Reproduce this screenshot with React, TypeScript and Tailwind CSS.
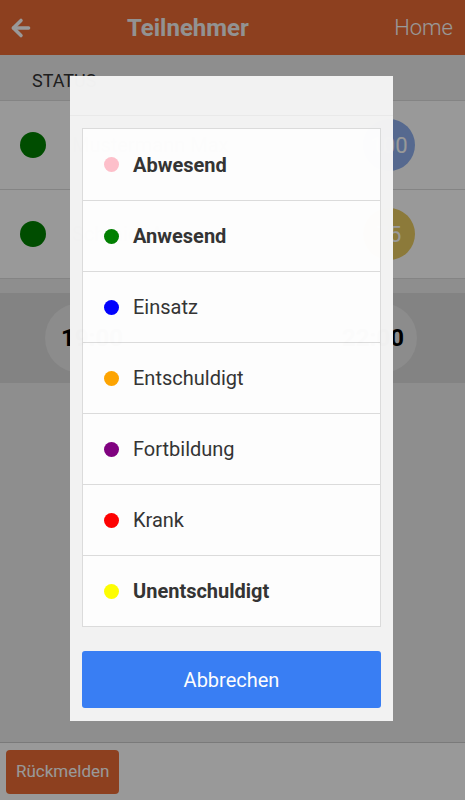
import { ArrowLeft } from 'lucide-react';

interface StatusOption {
  label: string;
  color: string;
  bold?: boolean;
}

const options: StatusOption[] = [
  { label: 'Abwesend', color: 'bg-[#ffc0cb]', bold: true },
  { label: 'Anwesend', color: 'bg-[#008000]', bold: true },
  { label: 'Einsatz', color: 'bg-[#0000ff]' },
  { label: 'Entschuldigt', color: 'bg-[#ffa500]' },
  { label: 'Fortbildung', color: 'bg-[#800080]' },
  { label: 'Krank', color: 'bg-[#ff0000]' },
  { label: 'Unentschuldigt', color: 'bg-[#ffff00]', bold: true },
];

function ParticipantRow({ name, value, circle }: { name: string; value: string; circle: string }) {
  return (
    <div className="flex items-center h-[89px] bg-white border-b border-[#dddddd] pl-5 pr-[50px]">
      <div className="w-[26px] h-[26px] rounded-full bg-[#008000] shrink-0" />
      <span className="ml-[26px] flex-1 text-[20px] text-[#777]">{name}</span>
      <div className={`w-[52px] h-[52px] rounded-full ${circle} flex items-center justify-center text-white text-[22px]`}>
        {value}
      </div>
    </div>
  );
}

export default function App() {
  return (
    <div className="relative h-[800px] w-full overflow-hidden bg-[#ededed] font-['Roboto',sans-serif] flex flex-col">
      {/* Header */}
      <div className="h-[55px] bg-[#eb6c35] flex items-center pl-2 pr-3 shrink-0">
        <ArrowLeft className="w-[26px] h-[26px] text-white" strokeWidth={3.2} />
        <span className="ml-[93px] text-[#f4f4f4] text-[24px] font-bold flex-1">Teilnehmer</span>
        <span className="text-white text-[22px] font-light">Home</span>
      </div>

      {/* Status subheader */}
      <div className="h-[46px] flex items-center pt-[6px] pl-8 border-b border-[#dddddd] text-[18px] text-[#333] shrink-0">
        STATUS
      </div>

      <ParticipantRow name="Mustermann Max" value="100" circle="bg-[#8fb0ee]" />
      <ParticipantRow name="Schmidt Anna" value="75" circle="bg-[#e9cb61]" />

      {/* Time row */}
      <div className="mt-[14px] h-[90px] bg-[#dadada] flex items-center justify-between pl-[45px] pr-[48px] shrink-0">
        <div className="w-[88px] h-[70px] rounded-full bg-white/40 flex items-center justify-center text-[24px] font-bold text-black pl-[6px]">
          19:00
        </div>
        <div className="w-[88px] h-[70px] rounded-full bg-white/40 flex items-center justify-center text-[24px] font-bold text-black">
          22:00
        </div>
      </div>

      <div className="flex-1 flex justify-center pt-[17px]">
        <div className="w-[75px] h-[75px] rounded-full bg-white ml-[-4px]" />
      </div>

      {/* Bottom bar */}
      <div className="h-[58px] bg-white border-t border-[#cccccc] flex items-center px-[6px] shrink-0">
        <button className="h-[44px] px-[10px] rounded bg-[#eb6c35] text-white text-[17px]">Rückmelden</button>
      </div>

      {/* Overlay + popup */}
      <div className="absolute inset-0 bg-black/40 flex items-start pt-[76px] pl-[70px]">
        <div className="w-[323px] bg-[#f4f4f4] opacity-[0.985] pb-[13px]">
          <div className="h-[40px] border-b border-[#ebebeb]" />
          <div className="px-3 pt-3">
            <div className="bg-white border border-[#dddddd]">
              {options.map((o, i) => (
                <div
                  key={o.label}
                  className={`h-[71px] flex items-center pl-[21px] ${i > 0 ? 'border-t border-[#dddddd]' : ''}`}
                >
                  <span className={`w-[15px] h-[15px] rounded-full ${o.color}`} />
                  <span className={`ml-[14px] text-[20px] text-[#333] ${o.bold ? 'font-bold' : ''}`}>{o.label}</span>
                </div>
              ))}
            </div>
            <button className="mt-[24px] w-full h-[57px] rounded-[3px] bg-[#387ef5] text-white text-[20px]">
              Abbrechen
            </button>
          </div>
        </div>
      </div>
    </div>
  );
}
